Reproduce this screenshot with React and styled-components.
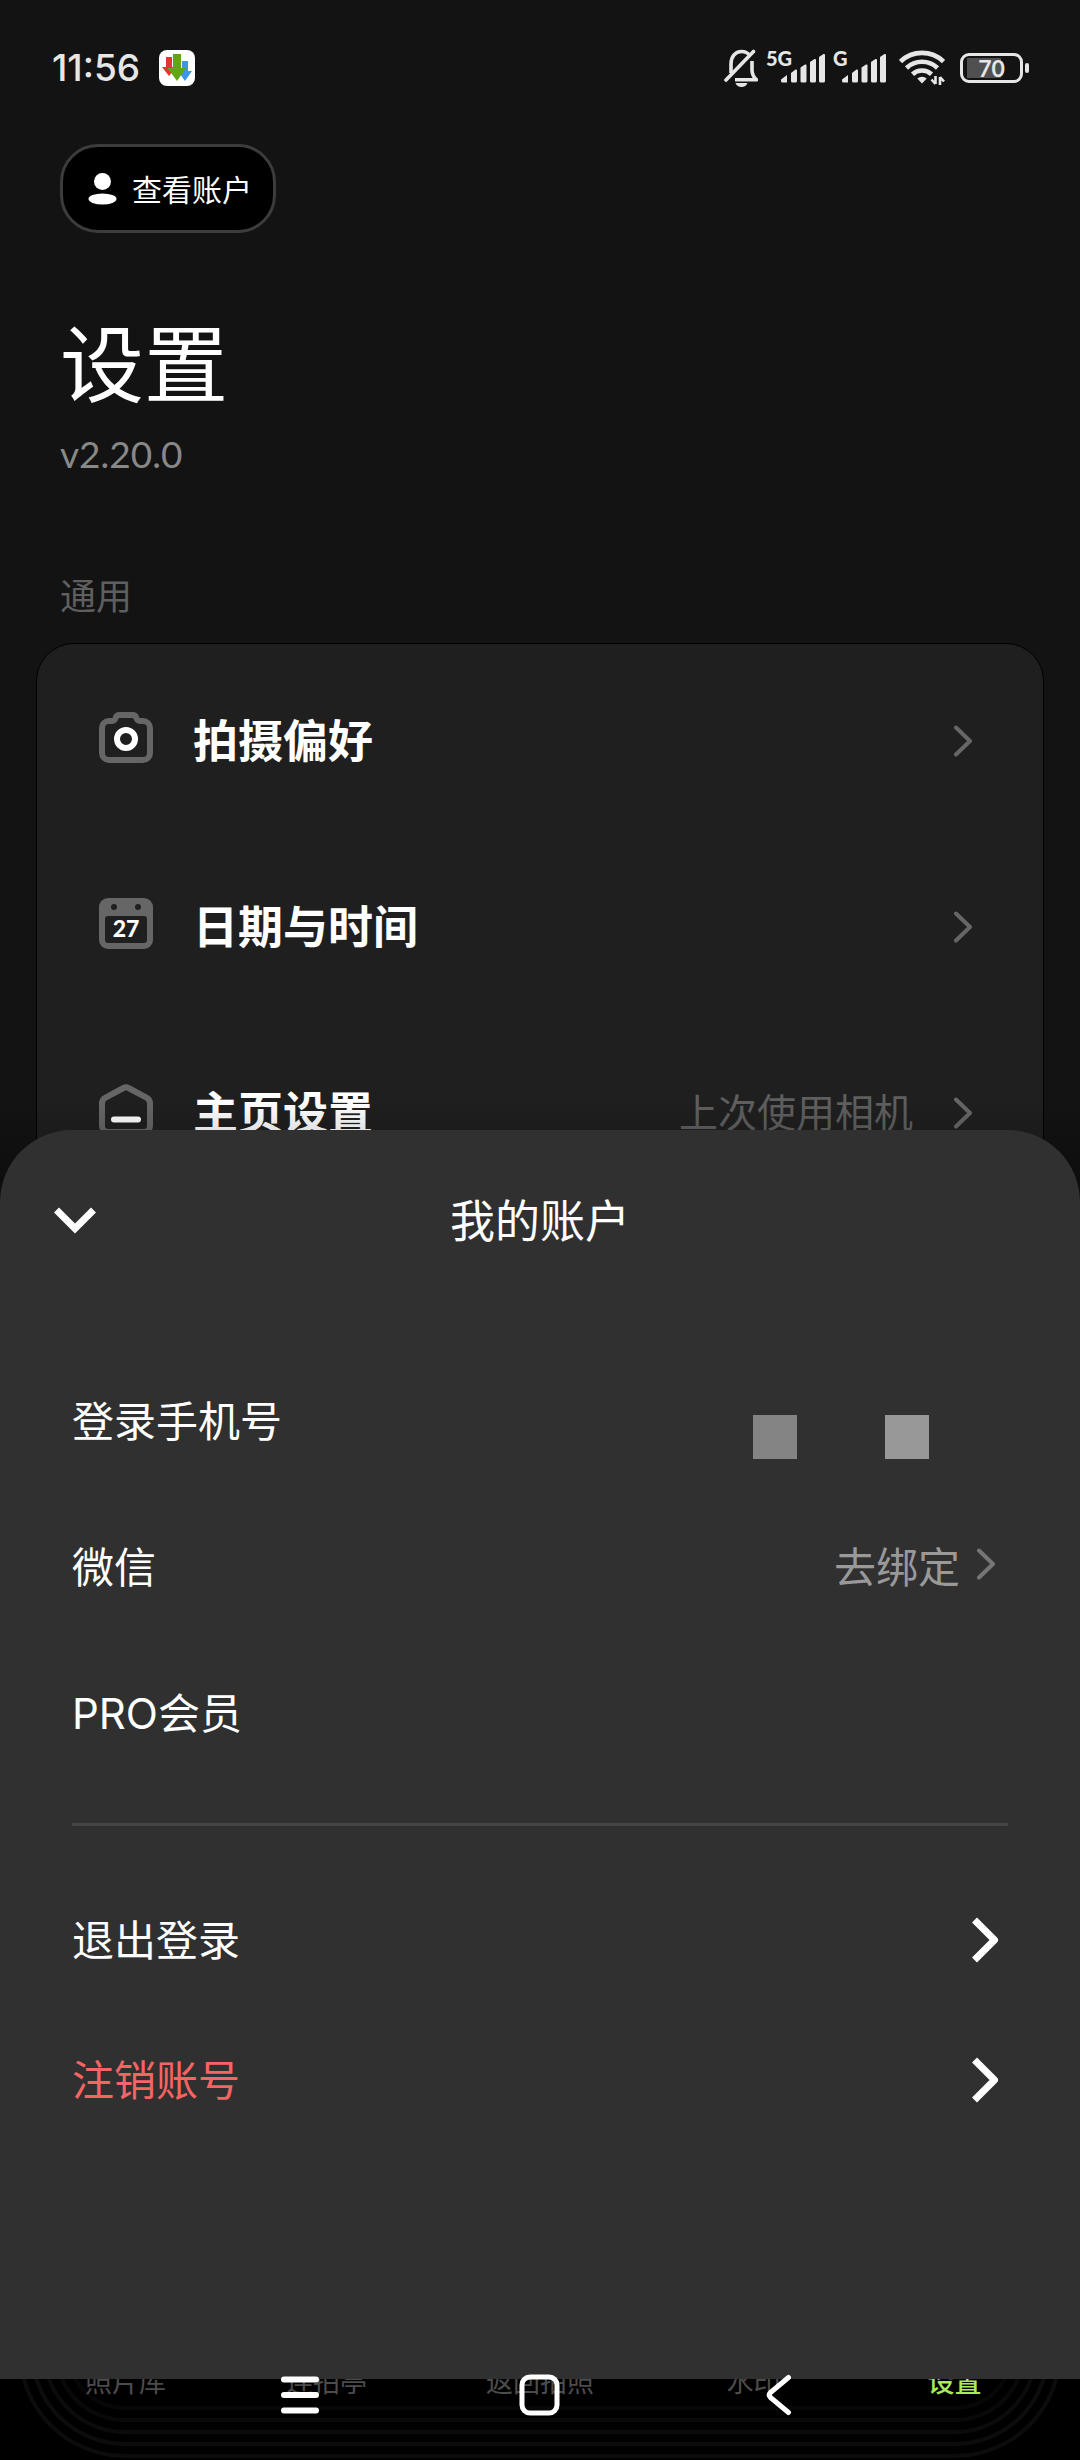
import React from 'react';
import styled, { createGlobalStyle } from 'styled-components';

const theme = {
  page: '#131313',
  card: '#1f1f1f',
  sheet: '#303030',
  white: '#ffffff',
  status: '#e6e6e6',
  icon: '#666666',
  muted: '#5f5f5f',
  danger: '#f76464',
  accent: '#a8ea5c'
};

const GlobalStyle = createGlobalStyle`
  * {
    box-sizing: border-box;
  }
  body {
    margin: 0;
    background: ${theme.page};
    color: ${theme.white};
    font-family: 'Lato', 'Noto Sans CJK SC', sans-serif;
  }
  h1, h2, p {
    margin: 0;
    font-weight: 400;
  }
  svg {
    display: block;
    flex: none;
  }
  button {
    border: 0;
    padding: 0;
    background: none;
    color: inherit;
    font: inherit;
    text-align: left;
    cursor: pointer;
  }
`

const Screen = styled.div`
  position: relative;
  display: flex;
  flex-direction: column;
  min-height: 100vh;
  overflow: hidden;
`

const StatusBar = styled.header`
  display: flex;
  align-items: center;
  justify-content: space-between;
  height: 136px;
  padding: 0 51px 0 52px;
  color: ${theme.status};
`

const StatusGroup = styled.div`
  display: flex;
  align-items: center;
  gap: ${props => props.$gap}px;
`

const Time = styled.span`
  font-family: 'Inter', sans-serif;
  font-size: 37px;
  font-weight: 500;
  line-height: 42px;
`

const Signal = styled.div`
  position: relative;
  padding-left: ${props => props.$inset}px;
`

const SignalLabel = styled.span`
  position: absolute;
  left: 0;
  top: -5px;
  font-size: 20px;
  font-weight: 900;
  line-height: 20px;
`

const PowerGroup = styled.div`
  display: flex;
  align-items: center;
  gap: 15px;
  margin-left: 5px;
`

const Battery = styled.div`
  display: flex;
  align-items: center;
  gap: 2px;
`

const BatteryBody = styled.div`
  width: 63px;
  height: 30px;
  border: 3px solid ${theme.status};
  border-radius: 9px;
  background: linear-gradient(#505050, #505050) 4px 2px / 34px 20px no-repeat;
  font-size: 23px;
  font-weight: 700;
  line-height: 24px;
  text-align: center;
`

const BatteryTip = styled.div`
  width: 4px;
  height: 10px;
  border-radius: 2px;
  background: ${theme.status};
`

const Intro = styled.section`
  display: flex;
  flex-direction: column;
  align-items: flex-start;
  padding: 8px 60px 0;
`

const AccountButton = styled.button`
  display: flex;
  align-items: center;
  gap: 15px;
  height: 89px;
  padding: 0 21px 0 25px;
  border: 3px solid #3c3c3c;
  border-radius: 38px;
  background: #000000;
  font-size: 30px;
`

const AccountLabel = styled.span`
  padding-bottom: 2px;
`

const PageTitle = styled.h1`
  margin-top: 81px;
  font-size: 84px;
  line-height: 100px;
`

const Version = styled.p`
  margin-top: 16px;
  color: #888888;
  font-size: 37px;
  line-height: 48px;
`

const SectionLabel = styled.h2`
  margin-top: 96px;
  color: ${theme.muted};
  font-size: 36px;
  line-height: 44px;
`

const Card = styled.section`
  margin: 25px 36px 0;
  padding-top: 4px;
  border: 1px solid #000000;
  border-radius: 38px;
  background: ${theme.card};
`

const SettingRow = styled.button`
  display: flex;
  align-items: center;
  width: 100%;
  height: 186px;
  padding: 0 70px 0 62px;
`

const SettingName = styled.span`
  flex: 1;
  margin-left: 40px;
  padding-bottom: 6px;
  font-size: 45px;
  font-weight: 700;
`

const SettingValue = styled.span`
  margin-right: 40px;
  padding-bottom: 6px;
  color: ${theme.muted};
  font-size: 39px;
`

const BottomShade = styled.div`
  position: absolute;
  inset: 1100px 0 0;
  background: linear-gradient(rgba(0, 0, 0, 0), rgba(0, 0, 0, 0.6) 160px);
`

const Sheet = styled.section`
  position: absolute;
  left: 0;
  right: 0;
  bottom: 81px;
  padding-bottom: 229px;
  border-radius: 72px 72px 0 0;
  background: ${theme.sheet};
  font-family: 'Inter', 'Noto Sans CJK SC', sans-serif;
`

const SheetHeader = styled.div`
  display: grid;
  grid-template-columns: 1fr auto 1fr;
  align-items: center;
  height: 182px;
  padding: 0 54px;
`

const SheetTitle = styled.h2`
  padding-bottom: 6px;
  font-size: 45px;
`

const SheetList = styled.div`
  margin: 0 72px;
  padding: ${props => props.$last ? '44px 0 0' : '36px 0 37px'};
  border-bottom: ${props => props.$last ? 0 : '3px solid #454545'};
`

const InfoRow = styled.div`
  display: flex;
  align-items: center;
  justify-content: space-between;
  height: 146px;
  padding: 0 12px 6px 0;
  font-size: 42px;
`

const BindButton = styled.button`
  display: flex;
  align-items: center;
  gap: 16px;
  color: #999999;
`

const MaskedPhone = styled.div`
  display: flex;
  gap: 88px;
  align-self: flex-end;
  padding: 0 67px 29px 0;
`

const MaskBlock = styled.span`
  width: 44px;
  height: 44px;
  background: ${props => props.$tone};
`

const ActionRow = styled.button`
  display: flex;
  align-items: center;
  justify-content: space-between;
  width: 100%;
  height: 140px;
  padding-right: 9px;
  color: ${props => props.$danger ? theme.danger : theme.white};
  font-size: 42px;
`

const ActionLabel = styled.span`
  padding-bottom: 6px;
`

const TabBar = styled.nav`
  position: relative;
  display: grid;
  grid-template-columns: 195fr 207fr 220fr 207fr 195fr;
  height: 100px;
  margin-top: auto;
  padding: 0 28px;
  background: #000000;
`

// faint grooves that run round the dock
const Grooves = styled.div`
  position: absolute;
  inset: -200px 18px 2px;
  border-radius: 107px;
  box-shadow:
    inset 0 0 0 4px #0c0c0c,
    inset 0 0 0 12px #000000,
    inset 0 0 0 16px #0c0c0c,
    inset 0 0 0 24px #000000,
    inset 0 0 0 28px #0b0b0b,
    inset 0 0 0 36px #000000,
    inset 0 0 0 40px #090909,
    inset 0 0 0 48px #000000,
    inset 0 0 0 52px #070707,
    inset 0 0 0 300px #000000;
`

const Tab = styled.a`
  position: relative;
  padding-top: 4px;
  color: ${props => props.$active ? theme.accent : '#4c4c4c'};
  font-size: 27px;
  font-weight: ${props => props.$active ? 500 : 400};
  line-height: 36px;
  text-align: center;
  text-decoration: none;
`

const SystemNav = styled.nav`
  position: absolute;
  left: 0;
  right: 0;
  bottom: 0;
  display: grid;
  grid-template-columns: repeat(3, 1fr);
  height: 130px;
  padding: 0 calc(100% / 6);
`

const SystemButton = styled.button`
  display: flex;
  align-items: center;
  justify-content: center;
`

const DownloadAppIcon = () => (
  <svg width="36" height="36" viewBox="0 0 36 36">
    <rect width="36" height="36" rx="8" fill="#fff" />
    <path d="M7 7h6v10h4l-7 9-7-9h4z" fill="#e5352f" />
    <path d="M23 11h6v10h4l-7 10-7-10h4z" fill="#3b96e8" />
    <path d="M14 4h8v14h5l-9 13-9.500-13H14z" fill="#62a517" />
  </svg>
);

const MutedBell = () => (
  <svg width="34" height="38" viewBox="0 0 34 38" fill="none" stroke="currentColor" strokeWidth="3.600">
    <path d="M7 24V15C7 8 11 2.500 17.500 2.500c3.500 0 6.500 1.500 8.200 4" />
    <path d="M28 12v9c0 4 1.500 7 4.500 9.800H11" strokeLinejoin="round" />
    <path d="M2 31L29.500 2.500" strokeLinecap="round" />
    <path d="M11.500 34h12c-1 2.600-3 4-6 4s-5-1.400-6-4z" fill="currentColor" stroke="none" />
  </svg>
);

const SignalBars = () => (
  <svg width="44" height="30" viewBox="0 0 44 30" fill="currentColor">
    <path d="M0 26.500l6-4.500v7.500H1.500A1.500 1.500 0 0 1 0 28z" />
    <path d="M10 20l4.500-3.500q1.500-.5 1.500 1v10.500q0 1.500-1.500 1.500h-3Q10 29.500 10 28z" />
    <path d="M19.500 14.500l4.500-3q1.500-.5 1.500 1V28q0 1.500-1.500 1.500h-3q-1.500 0-1.500-1.500z" />
    <path d="M29 9l4.500-3q1.500-.5 1.500 1v21q0 1.500-1.500 1.500h-3Q29 29.500 29 28z" />
    <path d="M38 4l4.500-3q1.500-.5 1.500 1v26q0 1.500-1.500 1.500h-3Q38 29.500 38 28z" />
  </svg>
);

const Wifi = () => (
  <svg width="46" height="36" viewBox="0 0 46 36" fill="none" stroke="currentColor" strokeWidth="4.600">
    <path d="M1.500 11.500a31 31 0 0 1 43 0" />
    <path d="M7.500 18a22.500 22.500 0 0 1 31 0" />
    <path d="M13.500 24.200a14 14 0 0 1 19 0" />
    <path d="M23 33.500l-4.700-5a7 7 0 0 1 9.400 0z" fill="currentColor" stroke="none" />
    <path d="M36.500 26v8M36.500 34l-4-4.500M41 35v-8M41 27l4 4.500" strokeWidth="2.600" />
  </svg>
);

const PersonIcon = () => (
  <svg width="29" height="32" viewBox="0 0 29 32" fill="currentColor">
    <circle cx="14.500" cy="8.500" r="8.500" />
    <ellipse cx="14.500" cy="26" rx="14" ry="5.500" />
  </svg>
);

const CameraIcon = () => (
  <svg width="54" height="58" viewBox="0 0 54 58" fill="none" strokeWidth="6">
    <path
      d="M3 16a7 7 0 0 1 7-7h3c2 0 3-1 3.600-3 .5-2 2-3 4-3h12.800c2 0 3.500 1 4 3 .6 2 1.600 3 3.600 3h3a7 7 0 0 1 7 7v25a7 7 0 0 1-7 7H10a7 7 0 0 1-7-7z"
      stroke={theme.icon}
    />
    <circle cx="27" cy="27" r="9" stroke="#fff" />
  </svg>
);

const CalendarIcon = () => (
  <svg width="54" height="58" viewBox="0 0 54 58">
    <rect width="54" height="51" rx="9" fill={theme.icon} />
    <rect x="6" y="18" width="42" height="27" rx="3" fill={theme.card} />
    <circle cx="15" cy="9" r="3" fill={theme.card} />
    <circle cx="39" cy="9" r="3" fill={theme.card} />
    <text x="27" y="39" fill="#fff" fontSize="23" fontWeight="900" textAnchor="middle">27</text>
  </svg>
);

const HomeIcon = () => (
  <svg width="54" height="58" viewBox="0 0 54 58" fill="none" strokeWidth="6">
    <path
      d="M3 19.500c0-3 1-4.500 3.500-5.800L24.500 4q2.500-1.300 5 0l18 9.700c2.500 1.300 3.500 2.800 3.500 5.800V42a6 6 0 0 1-6 6H9a6 6 0 0 1-6-6z"
      stroke={theme.icon}
    />
    <path d="M15 35.500h24" stroke="#fff" strokeLinecap="round" />
  </svg>
);

const ChevronRight = ({ color = theme.icon }) => (
  <svg width="20" height="32" viewBox="0 0 20 32" fill="none">
    <path d="M3 2.500L17 16 3 29.500" stroke={color} strokeWidth="4" strokeLinecap="round" strokeLinejoin="round" />
  </svg>
);

const ChevronBold = () => (
  <svg width="27" height="46" viewBox="0 0 27 46" fill="none">
    <path d="M2.500 3L22.500 23 2.500 43" stroke="#fff" strokeWidth="7" strokeLinejoin="round" />
  </svg>
);

const ChevronDown = () => (
  <svg width="42" height="28" viewBox="0 0 42 28" fill="none">
    <path d="M2.500 3L21 21.500 39.500 3" stroke="#fff" strokeWidth="7" />
  </svg>
);

const settings = [
  { name: '拍摄偏好', Icon: CameraIcon },
  { name: '日期与时间', Icon: CalendarIcon },
  { name: '主页设置', Icon: HomeIcon, value: '上次使用相机' }
];

const tabs = ['照片库', '连拍亭', '返回拍照', '水印', '设置'];

const TopStatus = () => (
  <StatusBar>
    <StatusGroup $gap={19}>
      <Time>11:56</Time>
      <DownloadAppIcon />
    </StatusGroup>
    <StatusGroup $gap={8}>
      <MutedBell />
      <Signal $inset={15}>
        <SignalLabel>5G</SignalLabel>
        <SignalBars />
      </Signal>
      <Signal $inset={9}>
        <SignalLabel>G</SignalLabel>
        <SignalBars />
      </Signal>
      <PowerGroup>
        <Wifi />
        <Battery>
          <BatteryBody>70</BatteryBody>
          <BatteryTip />
        </Battery>
      </PowerGroup>
    </StatusGroup>
  </StatusBar>
);

const AccountSheet = () => (
  <Sheet role="dialog" aria-label="我的账户">
    <SheetHeader>
      <button type="button" aria-label="收起"><ChevronDown /></button>
      <SheetTitle>我的账户</SheetTitle>
    </SheetHeader>
    <SheetList>
      <InfoRow>
        <span>登录手机号</span>
        <MaskedPhone>
          <MaskBlock $tone="#848484" />
          <MaskBlock $tone="#989898" />
        </MaskedPhone>
      </InfoRow>
      <InfoRow>
        <span>微信</span>
        <BindButton type="button">
          去绑定
          <ChevronRight color="#757575" />
        </BindButton>
      </InfoRow>
      <InfoRow>
        <span>PRO会员</span>
      </InfoRow>
    </SheetList>
    <SheetList $last>
      <ActionRow type="button">
        <ActionLabel>退出登录</ActionLabel>
        <ChevronBold />
      </ActionRow>
      <ActionRow type="button" $danger>
        <ActionLabel>注销账号</ActionLabel>
        <ChevronBold />
      </ActionRow>
    </SheetList>
  </Sheet>
);

const App = () => (
  <>
    <GlobalStyle />
    <Screen>
      <TopStatus />
      <Intro>
        <AccountButton type="button">
          <PersonIcon />
          <AccountLabel>查看账户</AccountLabel>
        </AccountButton>
        <PageTitle>设置</PageTitle>
        <Version>v2.20.0</Version>
        <SectionLabel>通用</SectionLabel>
      </Intro>
      <Card>
        {settings.map(({ name, Icon, value }) => (
          <SettingRow type="button" key={name}>
            <Icon />
            <SettingName>{name}</SettingName>
            {value && <SettingValue>{value}</SettingValue>}
            <ChevronRight />
          </SettingRow>
        ))}
      </Card>
      <BottomShade />
      <TabBar>
        <Grooves />
        {tabs.map(tab => (
          <Tab href="#" key={tab} $active={tab === '设置'}>{tab}</Tab>
        ))}
      </TabBar>
      <AccountSheet />
      <SystemNav>
        <SystemButton type="button" aria-label="最近任务">
          <svg width="40" height="42" viewBox="0 0 40 42" fill="none" stroke="#fff" strokeWidth="6" strokeLinecap="round">
            <path d="M4 5.500h32M4 21h32M4 36.500h32" />
          </svg>
        </SystemButton>
        <SystemButton type="button" aria-label="主屏幕">
          <svg width="42" height="42" viewBox="0 0 42 42" fill="none" stroke="#fff" strokeWidth="5">
            <rect x="3" y="3" width="35" height="36" rx="8" />
          </svg>
        </SystemButton>
        <SystemButton type="button" aria-label="返回">
          <svg width="29" height="42" viewBox="0 0 29 42" fill="none" stroke="#fff" strokeWidth="5" strokeLinecap="round" strokeLinejoin="round">
            <path d="M22.500 3.500L4.500 18.500q-2.500 2.500 0 5l18 15" />
          </svg>
        </SystemButton>
      </SystemNav>
    </Screen>
  </>
);

export default App;
